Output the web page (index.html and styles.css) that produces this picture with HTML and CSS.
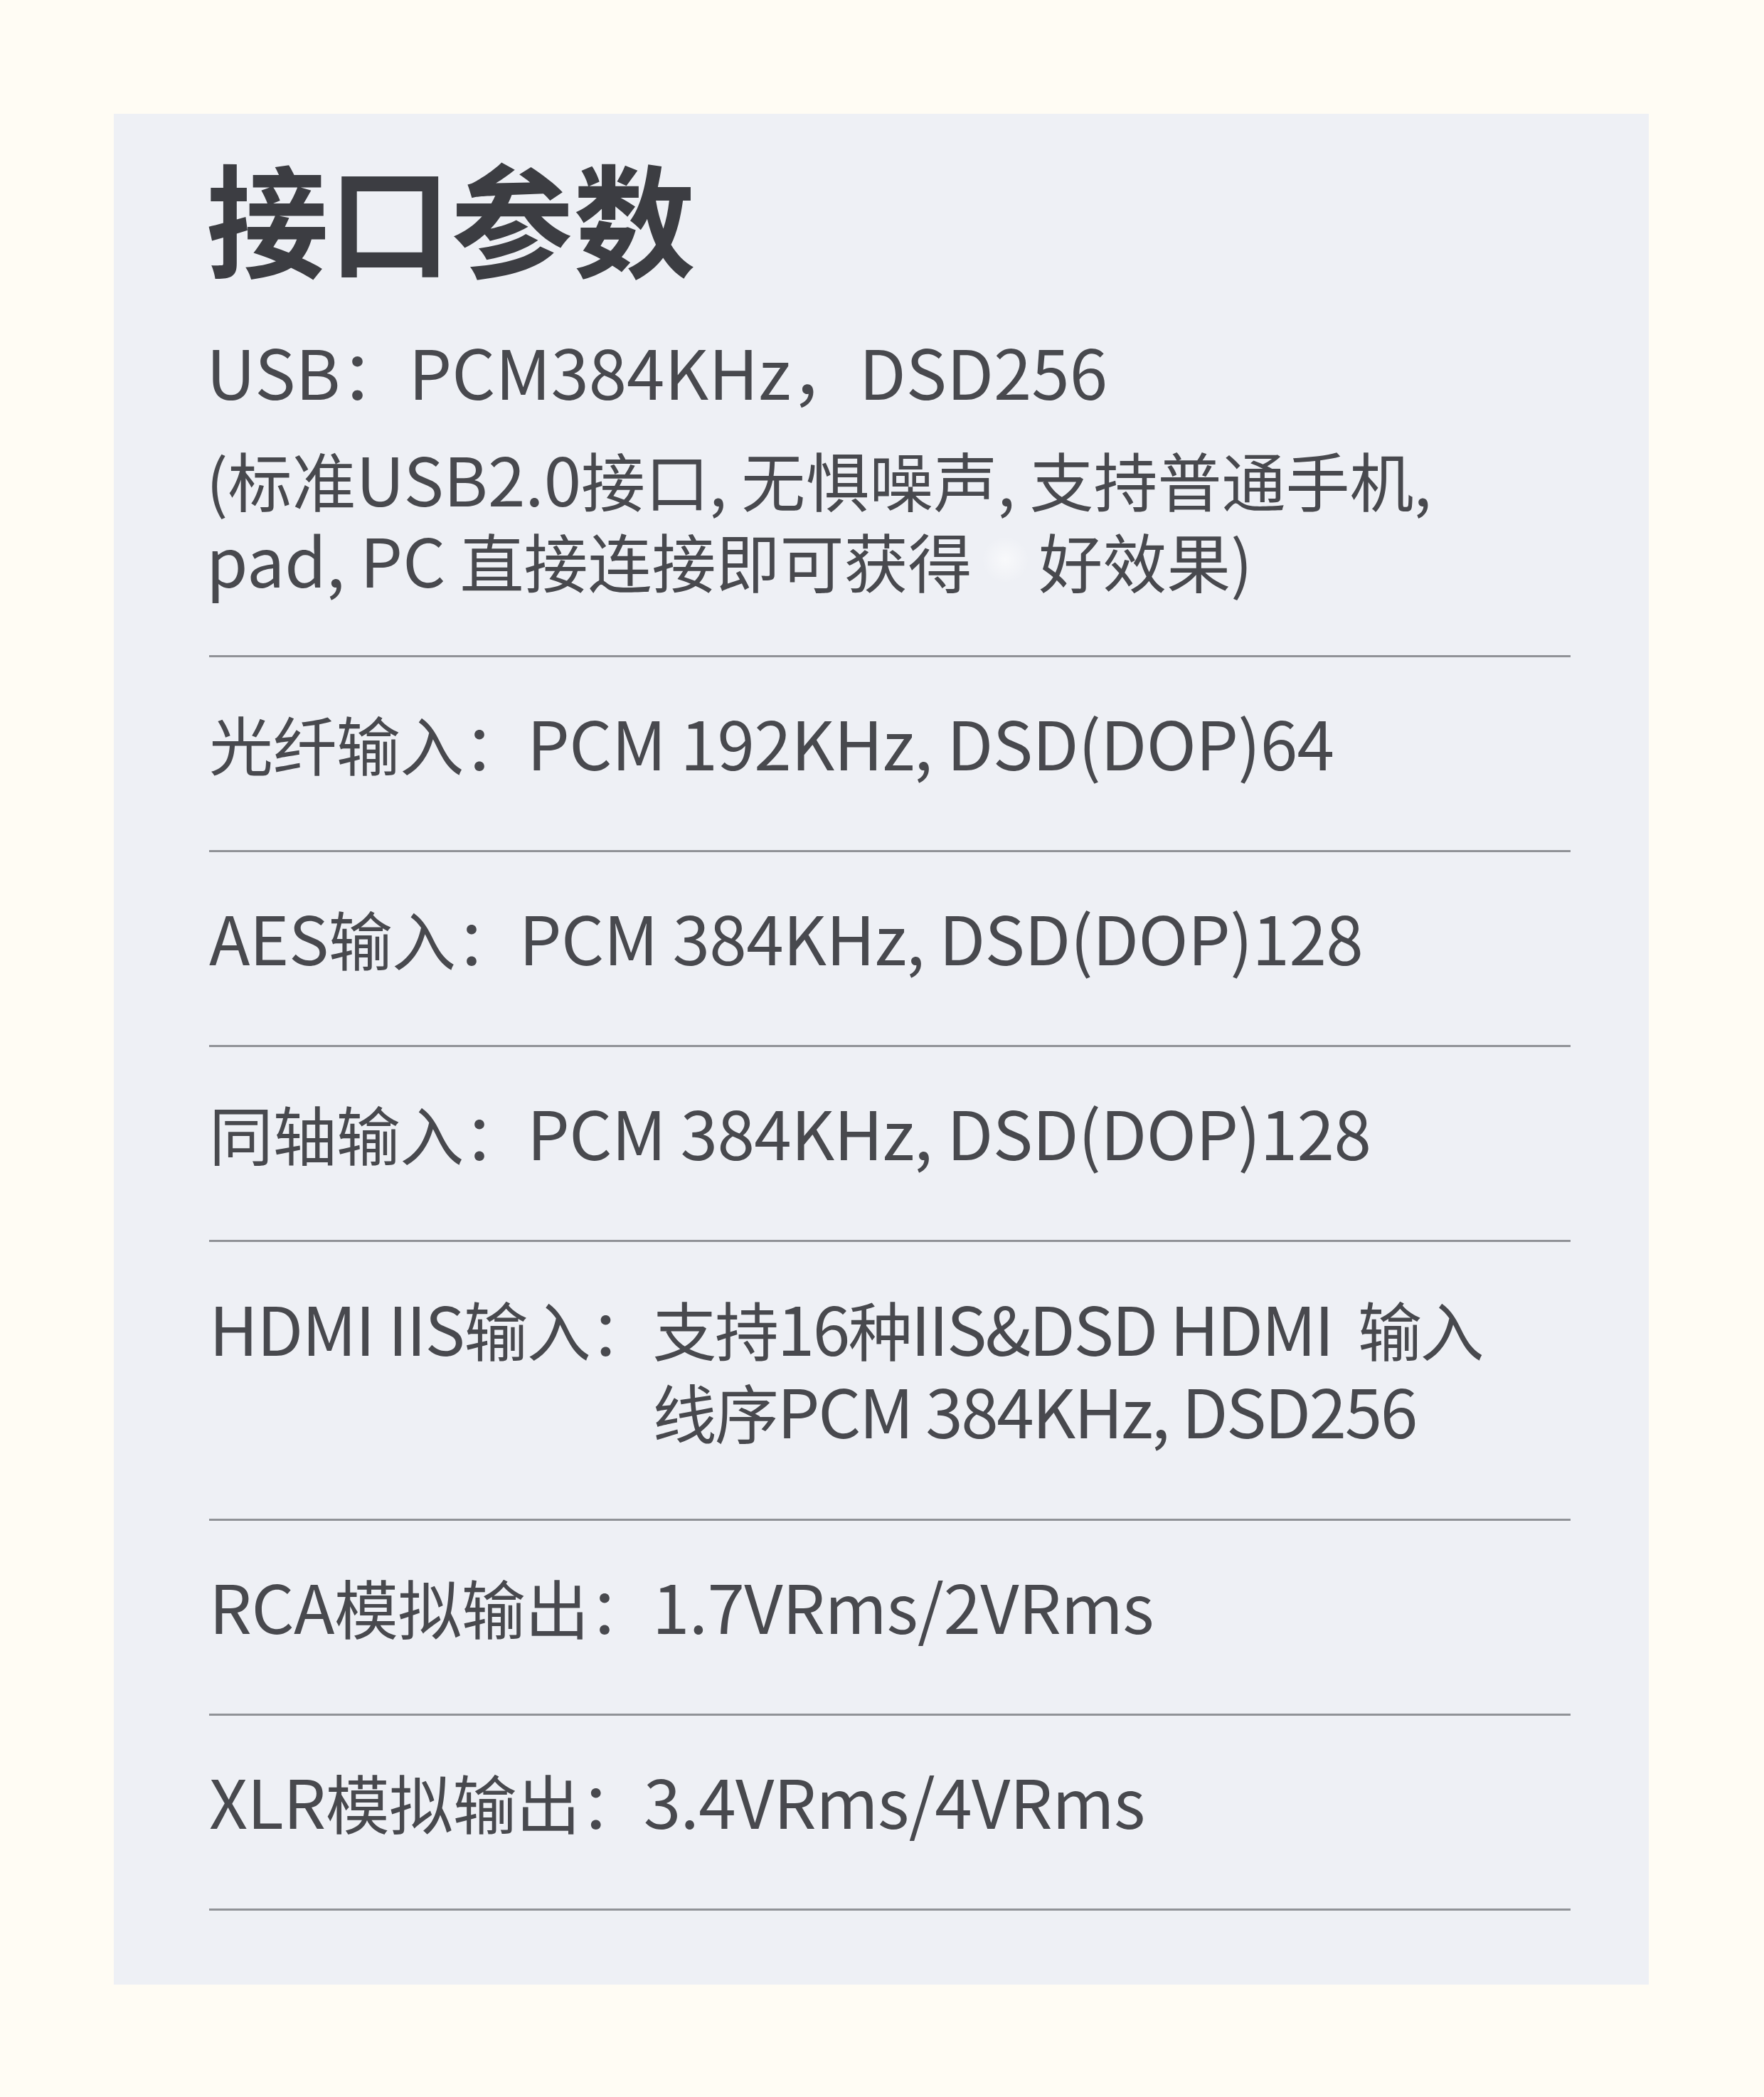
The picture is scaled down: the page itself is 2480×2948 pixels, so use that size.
FILE: index.html
```html
<!DOCTYPE html>
<html lang="zh-CN">
<head>
    <meta charset="utf-8">
    <title>接口参数</title>
    <link rel="stylesheet" href="styles.css">
</head>
<body>
    <div class="spec-panel">
        <h1 class="spec-title">接口参数</h1>

        <div class="usb-block">
            <p class="usb-main">USB：PCM384KHz，DSD256</p>
            <p class="usb-note">(标准<span class="lat">USB2.0</span>接口, 无惧噪声, 支持普通手机,<br><span class="lat">pad, PC</span> 直接连接即可获得<span class="gap">　</span>好效果)</p>
        </div>

        <ul class="spec-list">
            <li class="spec-row">光纤输入：<span class="lat">PCM 192KHz, DSD(DOP)64</span></li>
            <li class="spec-row"><span class="lat">AES</span>输入：<span class="lat">PCM 384KHz, DSD(DOP)128</span></li>
            <li class="spec-row">同轴输入：<span class="lat">PCM 384KHz, DSD(DOP)128</span></li>
            <li class="spec-row spec-row--split">
                <span class="spec-label"><span class="lat">HDMI IIS</span>输入：</span>
                <span class="spec-value">支持<span class="lat">16</span>种<span class="lat">IIS&amp;DSD HDMI</span>&nbsp; 输入<br>线序<span class="lat">PCM 384KHz, DSD256</span></span>
            </li>
            <li class="spec-row"><span class="lat">RCA</span>模拟输出：<span class="lat">1.7VRms/2VRms</span></li>
            <li class="spec-row"><span class="lat">XLR</span>模拟输出：<span class="lat">3.4VRms/4VRms</span></li>
        </ul>
    </div>
</body>
</html>
```

FILE: styles.css
```css
:root {
    --page-bg: #fffcf4;
    --panel-bg: #eef0f5;
    --title: #3c3d42;
    --text: #48494e;
    --rule: #909297;
    --font-body: "Noto Sans CJK SC", "Noto Sans", sans-serif;
}

* { box-sizing: border-box; margin: 0; padding: 0; }

body {
    background: var(--page-bg);
    font-family: var(--font-body);
    color: var(--text);
    min-height: 2948px;
    padding-top: 160px;
}

.spec-panel {
    width: 2158px;
    margin-left: 160px;
    background: var(--panel-bg);
    padding: 39px 110px 104px 130px;
}

.spec-title {
    font-size: 172px;
    line-height: 206px;
    font-weight: 700;
    color: var(--title);
}

.usb-block {
    margin-top: 59px;
    padding-bottom: 77px;
    line-height: 114px;
}

.usb-main {
    font-size: 96px;
}

.usb-note {
    margin-top: 38px;
    font-size: 90px;
}

/* latin runs sit a touch larger than the hanzi, like the original type */
.lat {
    font-size: 1.05em;
    line-height: 1;
}

.gap {
    display: inline-block;
    width: 1.04em;
    background: radial-gradient(circle, rgba(255, 255, 255, 0.6) 0%, rgba(255, 255, 255, 0) 45%);
}

.spec-list {
    list-style: none;
    margin-left: 4px;
    border-bottom: 3px solid var(--rule);
}

.spec-row {
    border-top: 3px solid var(--rule);
    padding: 63px 0 94px;
    font-size: 90px;
    line-height: 114px;
    letter-spacing: -0.6px;
    white-space: nowrap;
}

.spec-row--split {
    display: flex;
    line-height: 116px;
    letter-spacing: -1.6px;
}

.spec-label {
    flex-shrink: 0;
}

.spec-value {
    letter-spacing: -2.4px;
}
```
